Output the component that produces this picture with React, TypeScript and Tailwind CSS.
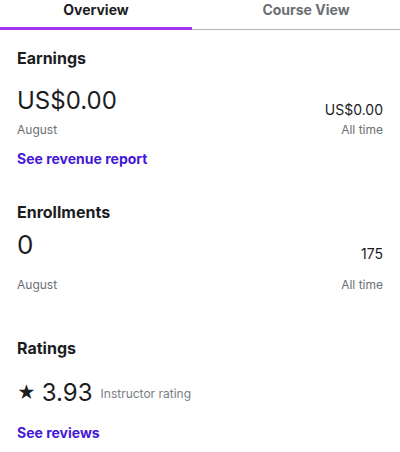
import React from "react";

function StatRow({
  value,
  total,
  valueClass = "",
  labelGap = "mt-[5px]",
}: {
  value: string;
  total: string;
  valueClass?: string;
  labelGap?: string;
}) {
  return (
    <div>
      <div className="flex items-end justify-between">
        <span className={`text-[24px] leading-[32px] text-[#1c1d1f] ${valueClass}`}>{value}</span>
        <span className="text-[14px] leading-[20px] text-[#1c1d1f] -mb-[3px]">{total}</span>
      </div>
      <div className={`${labelGap} flex justify-between text-[12px] leading-[16px] text-[#6a6f73]`}>
        <span>August</span>
        <span>All time</span>
      </div>
    </div>
  );
}

export default function App() {
  return (
    <div
      className="min-h-[452px] w-[400px] bg-white text-[#1c1d1f]"
      style={{ fontFamily: "Inter, 'Noto Sans', sans-serif" }}
    >
      {/* Tabs */}
      <div className="flex h-[30px] border-b border-[#b0b4b8]">
        <div className="-mb-px flex w-[192px] items-start justify-center border-b-[3px] border-[#a435f0] text-[14px] font-bold leading-[20px] text-[#1c1d1f]">
          Overview
        </div>
        <div className="flex flex-1 items-start justify-center pl-[20px] text-[14px] font-bold leading-[20px] text-[#6a6f73]">
          Course View
        </div>
      </div>

      <div className="px-[17px]">
        {/* Earnings */}
        <section className="pt-[16px]">
          <h2 className="text-[16px] font-bold leading-[24px]">Earnings</h2>
          <div className="mt-[15px]">
            <StatRow value="US$0.00" total="US$0.00" />
          </div>
          <a className="mt-[11px] block text-[14px] font-bold leading-[20px] text-[#4318d8]">
            See revenue report
          </a>
        </section>

        {/* Enrollments */}
        <section className="pt-[31px]">
          <h2 className="text-[16px] font-bold leading-[24px]">Enrollments</h2>
          <div className="mt-[5px]">
            <StatRow value="0" total="175" valueClass="text-[26px]" labelGap="mt-[16px]" />
          </div>
        </section>

        {/* Ratings */}
        <section className="pt-[43px]">
          <h2 className="text-[16px] font-bold leading-[24px]">Ratings</h2>
          <div className="mt-[16px] flex items-center">
            <span className="text-[18px] leading-[32px]">★</span>
            <span className="ml-[6px] text-[24px] leading-[32px]">3.93</span>
            <span className="ml-[8px] mt-[2px] text-[12px] leading-[32px] text-[#797d82]">Instructor rating</span>
          </div>
          <a className="mt-[13px] block text-[14px] font-bold leading-[20px] text-[#4318d8]">
            See reviews
          </a>
        </section>
      </div>
    </div>
  );
}
